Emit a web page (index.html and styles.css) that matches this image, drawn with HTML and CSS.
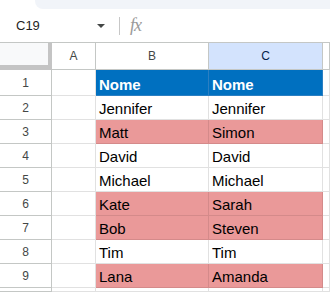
FILE: index.html
```html
<!DOCTYPE html>
<html lang="it">
<head>
  <meta charset="UTF-8">
  <title>Foglio</title>
  <link rel="stylesheet" href="styles.css">
</head>
<body>
  <div class="top-strip"></div>
  <div class="formula-bar">
    <div class="name-box">C19</div>
    <div class="name-arrow"></div>
    <div class="bar-sep"></div>
    <div class="fx">fx</div>
  </div>

  <div class="sheet">
    <div class="corner"></div>
    <div class="col-head">A</div>
    <div class="col-head">B</div>
    <div class="col-head selected">C</div>
    <div class="col-head"></div>

    <div class="row-head">1</div>
    <div class="cell"></div>
    <div class="cell blue">Nome</div>
    <div class="cell blue">Nome</div>
    <div class="cell"></div>

    <div class="row-head">2</div>
    <div class="cell"></div>
    <div class="cell">Jennifer</div>
    <div class="cell">Jennifer</div>
    <div class="cell"></div>

    <div class="row-head">3</div>
    <div class="cell"></div>
    <div class="cell pink">Matt</div>
    <div class="cell pink">Simon</div>
    <div class="cell"></div>

    <div class="row-head">4</div>
    <div class="cell"></div>
    <div class="cell">David</div>
    <div class="cell">David</div>
    <div class="cell"></div>

    <div class="row-head">5</div>
    <div class="cell"></div>
    <div class="cell">Michael</div>
    <div class="cell">Michael</div>
    <div class="cell"></div>

    <div class="row-head">6</div>
    <div class="cell"></div>
    <div class="cell pink">Kate</div>
    <div class="cell pink">Sarah</div>
    <div class="cell"></div>

    <div class="row-head">7</div>
    <div class="cell"></div>
    <div class="cell pink">Bob</div>
    <div class="cell pink">Steven</div>
    <div class="cell"></div>

    <div class="row-head">8</div>
    <div class="cell"></div>
    <div class="cell">Tim</div>
    <div class="cell">Tim</div>
    <div class="cell"></div>

    <div class="row-head">9</div>
    <div class="cell"></div>
    <div class="cell pink">Lana</div>
    <div class="cell pink">Amanda</div>
    <div class="cell"></div>

    <div class="row-head"></div>
    <div class="cell"></div>
    <div class="cell"></div>
    <div class="cell"></div>
    <div class="cell"></div>
  </div>
</body>
</html>
```

FILE: styles.css
```css
body {
  margin: 0;
  width: 330px;
  height: 292px;
  overflow: hidden;
  background: #fff;
  font-family: Arial, "Liberation Sans", sans-serif;
  color: #000;
}

.top-strip {
  height: 9px;
  margin-left: 35px;
  background: #f1f4f9;
  border-bottom-left-radius: 8px;
}

.formula-bar {
  height: 33px;
  display: flex;
  align-items: center;
}

.name-box {
  width: 81px;
  padding-left: 16px;
  font-size: 13px;
  color: #1f1f1f;
  box-sizing: border-box;
}

.name-arrow {
  width: 0;
  height: 0;
  margin-left: 16px;
  border-left: 4px solid transparent;
  border-right: 4px solid transparent;
  border-top: 4px solid #444746;
}

.bar-sep {
  width: 1px;
  height: 18px;
  margin-left: 14px;
  background: #c7c7c7;
}

.fx {
  margin-left: 10px;
  font-family: "Liberation Serif", serif;
  font-style: italic;
  font-size: 18px;
  color: #9a9a9a;
  letter-spacing: -1px;
}

.sheet {
  display: grid;
  grid-template-columns: 52px 44px 113px 114px 1fr;
  grid-template-rows: 27px 26px repeat(8, 24px) 4px;
  border-top: 1px solid #c4c7c5;
}

.sheet > div {
  box-sizing: border-box;
  border-right: 1px solid #e1e1e1;
  border-bottom: 1px solid #e1e1e1;
}

.corner {
  background: #f8f9fa;
  border-right: 4px solid #c4c4c4 !important;
  border-bottom: 5px solid #c4c4c4 !important;
}

.col-head,
.row-head {
  display: flex;
  align-items: center;
  justify-content: center;
  font-size: 12px;
  color: #444746;
  border-color: #c4c7c5 !important;
}

.col-head.selected {
  background: #d3e3fd;
  color: #041e49;
}

.cell {
  display: flex;
  align-items: flex-end;
  padding: 0 0 2px 3px;
  font-size: 15px;
  line-height: 17px;
  white-space: nowrap;
}

.cell.blue {
  background: #0070c0;
  color: #fff;
  font-weight: bold;
  border-color: #2b7fc2;
}

.cell.pink {
  background: #ea9999;
  border-color: #d48a8a;
}
```
